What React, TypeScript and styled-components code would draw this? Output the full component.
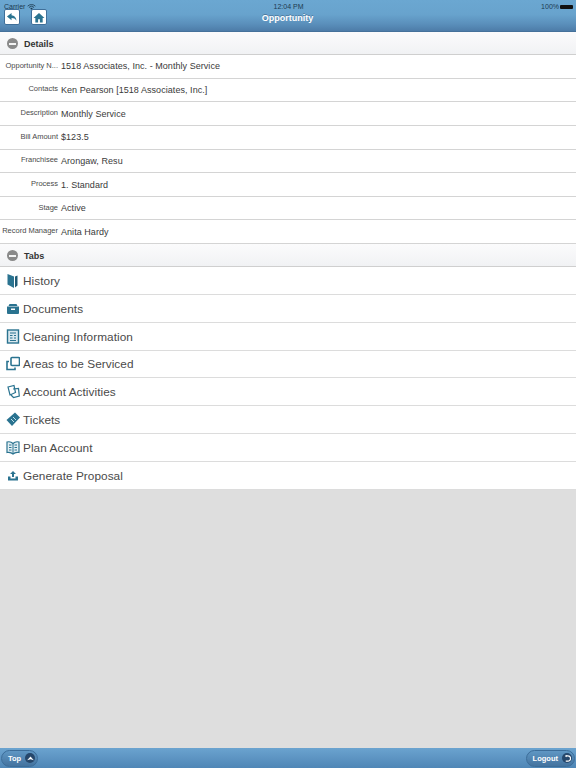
import { ReactNode } from "react";
import styled, { createGlobalStyle } from "styled-components";

const details = [
  { label: "Opportunity N...", value: "1518 Associates, Inc. - Monthly Service" },
  { label: "Contacts", value: "Ken Pearson [1518 Associates, Inc.]" },
  { label: "Description", value: "Monthly Service" },
  { label: "Bill Amount", value: "$123.5" },
  { label: "Franchisee", value: "Arongaw, Resu" },
  { label: "Process", value: "1. Standard" },
  { label: "Stage", value: "Active" },
  { label: "Record Manager", value: "Anita Hardy" },
];

const teal = "#2a7390";

const tabs: { label: string; icon: ReactNode }[] = [
  {
    label: "History",
    icon: (
      <>
        <path d="M1.500 1L8 3.500V15L1.500 11.500z" fill={teal} />
        <path d="M9 3.500L11.500 2.500V12.500L9 14.500z" fill="#1f5a74" />
      </>
    ),
  },
  {
    label: "Documents",
    icon: (
      <>
        <path d="M3.500 3h7l1 2h-9z" fill={teal} />
        <path d="M1 5.500h12v6.500a1 1 0 0 1-1 1H2a1 1 0 0 1-1-1z" fill={teal} />
        <rect x="5" y="7.500" width="4" height="1.500" fill="#fff" />
      </>
    ),
  },
  {
    label: "Cleaning Information",
    icon: (
      <>
        <rect x="1.500" y="1" width="11" height="13" fill="#d9e8ee" stroke={teal} strokeWidth="1.400" />
        <path d="M4 4h6M4 6.500h2.500M8 6.500h2M4 9h2.500M8 9h2M4 11.500h6" stroke={teal} strokeWidth="1.100" />
      </>
    ),
  },
  {
    label: "Areas to be Serviced",
    icon: (
      <>
        <rect x="5" y="1.500" width="8.500" height="8" rx="1" fill="none" stroke={teal} strokeWidth="1.600" />
        <path d="M3 5.500H1v8h8v-2" fill="none" stroke={teal} strokeWidth="1.600" />
      </>
    ),
  },
  {
    label: "Account Activities",
    icon: (
      <>
        <path d="M2 3l6-1.500 1.500 7L4 11z" fill="none" stroke={teal} strokeWidth="1.200" />
        <path d="M7 5l5.500-.5.800 7.500-5.800 1.500L5 11" fill="none" stroke={teal} strokeWidth="1.200" />
      </>
    ),
  },
  {
    label: "Tickets",
    icon: (
      <>
        <path d="M0.500 8L9 0.500l5 5L6 14z" fill={teal} />
        <path d="M5 7l3 3M7 5l3 3" stroke="#bfe0ea" strokeWidth="1" />
      </>
    ),
  },
  {
    label: "Plan Account",
    icon: (
      <>
        <path d="M7 3.500C5.500 2 3 1.500 1 2v10.500c2-.4 4.500 0 6 1.500 1.500-1.500 4-1.900 6-1.500V2c-2-.5-4.500 0-6 1.500z" fill="#e3eff3" stroke={teal} strokeWidth="1.200" />
        <path d="M7 3.500V14M3 5h2.500M3 7.500h2.500M3 10h2.500M8.500 5H11M8.500 7.500H11M8.500 10H11" stroke={teal} strokeWidth="1" />
      </>
    ),
  },
  {
    label: "Generate Proposal",
    icon: (
      <>
        <path d="M7 3l3 3H8v3H6V6H4z" fill={teal} />
        <path d="M2 8.500H4.500v2h5v-2H12v4H2z" fill={teal} />
      </>
    ),
  },
];

const GlobalStyle = createGlobalStyle`
  html, body {
    margin: 0;
    height: 100%;
  }
  body {
    font-family: "Liberation Sans", Arial, sans-serif;
    background: #dedede;
  }
`;

export default function App() {
  return (
    <>
      <GlobalStyle />
      <Page>
        <Header>
          <StatusBar>
            <Carrier>
              Carrier
              <svg width="9" height="6" viewBox="0 0 10 7">
                <path d="M0.500 2.500a6.500 6.500 0 0 1 9 0M2 4a4.300 4.300 0 0 1 6 0" fill="none" stroke="#1d3a50" strokeWidth="1" />
                <path d="M3.600 5.200a2 2 0 0 1 2.800 0L5 6.800z" fill="#1d3a50" />
              </svg>
            </Carrier>
            <Clock>12:04 PM</Clock>
            <Battery>
              100%
              <BatteryIcon />
            </Battery>
          </StatusBar>
          <NavBar>
            <NavButtons>
              <NavButton>
                <svg width="12" height="11" viewBox="0 0 13 12">
                  <path d="M6 1L1 5l5 4V6.500c2.500 0 4 .8 5.500 3C11 6 9 3.700 6 3.500z" fill={teal} />
                </svg>
              </NavButton>
              <NavButton>
                <svg width="12" height="11" viewBox="0 0 13 12">
                  <path d="M6.500 1L0.500 6.500h2V11.500h3V8h2v3.500h3V6.500h2z" fill={teal} />
                </svg>
              </NavButton>
            </NavButtons>
            <NavTitle>Opportunity</NavTitle>
          </NavBar>
        </Header>

        <SectionHead>
          <Collapse />
          Details
        </SectionHead>
        {details.map((row) => (
          <DetailRow key={row.label}>
            <DetailLabel>{row.label}</DetailLabel>
            <DetailValue>{row.value}</DetailValue>
          </DetailRow>
        ))}

        <SectionHead>
          <Collapse />
          Tabs
        </SectionHead>
        {tabs.map((tab) => (
          <TabRow key={tab.label}>
            <TabIcon viewBox="0 0 14 15">{tab.icon}</TabIcon>
            <TabLabel>{tab.label}</TabLabel>
          </TabRow>
        ))}

        <Spacer />

        <Footer>
          <Pill>
            Top
            <PillIcon>
              <svg width="7" height="5" viewBox="0 0 8 6">
                <path d="M4 0.500L8 5 4 4 0 5z" fill="#fff" />
              </svg>
            </PillIcon>
          </Pill>
          <Pill>
            Logout
            <PillIcon>
              <svg width="7" height="7" viewBox="0 0 8 8">
                <path d="M2 1h2.500a2.500 2.500 0 0 1 0 6H2" fill="none" stroke="#fff" strokeWidth="1.400" />
                <path d="M3 0v2.500L1 1.200z" fill="#fff" />
              </svg>
            </PillIcon>
          </Pill>
        </Footer>
      </Page>
    </>
  );
}

const Page = styled.div`
  width: 576px;
  height: 768px;
  display: flex;
  flex-direction: column;
  overflow: hidden;
`;

const Header = styled.header`
  height: 32px;
  flex: none;
  box-sizing: border-box;
  background: linear-gradient(#6ba7d1 0%, #68a3cd 45%, #5a8fbb 75%, #4d7ca8 97%, #3d668c 100%);
  display: flex;
  flex-direction: column;
`;

const StatusBar = styled.div`
  height: 7px;
  flex: none;
  padding: 0 3px 0 4px;
  display: grid;
  grid-template-columns: 1fr auto 1fr;
  align-items: center;
  font-size: 7px;
  line-height: 7px;
  color: #1d3a50;
`;

const Carrier = styled.span`
  display: flex;
  align-items: center;
  gap: 2px;
  padding-top: 3px;
`;

const Clock = styled.span`
  padding-top: 3px;
`;

const Battery = styled.span`
  justify-self: end;
  display: flex;
  align-items: center;
  gap: 1px;
  padding-top: 3px;
`;

const BatteryIcon = styled.i`
  display: block;
  width: 13px;
  height: 4px;
  background: #111;
  border-radius: 1px;
`;

const NavBar = styled.div`
  flex: 1;
  display: flex;
  align-items: center;
  justify-content: center;
  position: relative;
`;

const NavButtons = styled.div`
  position: absolute;
  left: 4px;
  top: 2px;
  display: flex;
  gap: 11px;
`;

const NavButton = styled.div`
  width: 16px;
  height: 16px;
  box-sizing: border-box;
  background: #fff;
  border: 1px solid #3f6f99;
  border-radius: 2px;
  display: flex;
  align-items: center;
  justify-content: center;
`;

const NavTitle = styled.div`
  font-size: 9px;
  font-weight: bold;
  color: #fff;
  text-shadow: 0 -1px 0 rgba(0, 0, 0, 0.25);
  padding: 0 1px 3px 0;
`;

const SectionHead = styled.div`
  height: 23px;
  flex: none;
  box-sizing: border-box;
  padding: 1px 0 0 7px;
  background: linear-gradient(#fbfbfc, #f1f2f4);
  border-bottom: 1px solid #cfcfcf;
  display: flex;
  align-items: center;
  gap: 6px;
  font-size: 9px;
  font-weight: bold;
  color: #333;
`;

const Collapse = styled.span`
  width: 11px;
  height: 11px;
  border-radius: 50%;
  background: #8a8a8a;
  display: flex;
  align-items: center;
  justify-content: center;
  &::after {
    content: "";
    width: 7px;
    height: 2px;
    background: #f4f4f4;
  }
`;

const DetailRow = styled.div`
  height: 23.650px;
  flex: none;
  box-sizing: border-box;
  background: #fff;
  border-bottom: 1px solid #d4d4d4;
  display: flex;
  align-items: center;
`;

const DetailLabel = styled.div`
  width: 58px;
  margin-right: 3px;
  text-align: right;
  white-space: nowrap;
  font-size: 7.500px;
  color: #4a4a4a;
  padding-bottom: 2px;
`;

const DetailValue = styled.div`
  font-size: 9px;
  letter-spacing: 0.050px;
  color: #3a3a3a;
`;

const TabRow = styled.div`
  height: 27.800px;
  flex: none;
  box-sizing: border-box;
  background: #fff;
  border-bottom: 1px solid #dcdcdc;
  display: flex;
  align-items: center;
  gap: 3px;
  padding-left: 6px;
`;

const TabLabel = styled.span`
  font-size: 11.800px;
  letter-spacing: 0.050px;
  color: #4a4a4a;
  padding-top: 1px;
`;

const TabIcon = styled.svg`
  width: 14px;
  height: 15px;
  flex: none;
`;

const Spacer = styled.div`
  flex: 1;
  background: #dedede;
`;

const Footer = styled.footer`
  height: 20px;
  flex: none;
  background: linear-gradient(#6ba3cf, #4f86b6);
  display: flex;
  align-items: center;
  justify-content: space-between;
  padding: 0 1px;
`;

const Pill = styled.div`
  height: 17px;
  box-sizing: border-box;
  padding: 0 2px 0 6px;
  border: 1px solid #3c6d99;
  border-radius: 9px;
  background: linear-gradient(#5f97c4, #44739f);
  display: flex;
  align-items: center;
  gap: 4px;
  font-size: 7.500px;
  font-weight: bold;
  color: #fff;
`;

const PillIcon = styled.span`
  width: 10px;
  height: 10px;
  border-radius: 50%;
  background: #26476b;
  display: flex;
  align-items: center;
  justify-content: center;
`;
